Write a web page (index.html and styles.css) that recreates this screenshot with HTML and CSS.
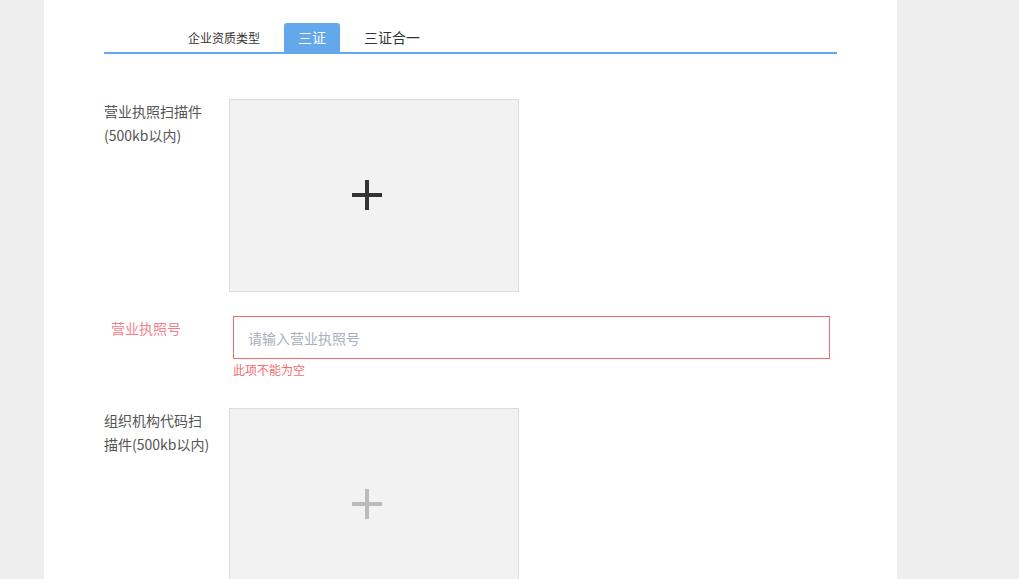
FILE: index.html
```html
<!DOCTYPE html>
<html lang="zh-CN">
<head>
<meta charset="utf-8">
<title>三证</title>
<link rel="stylesheet" href="styles.css">
</head>
<body>
<div class="page">
  <div class="tabs">
    <div class="tab-list">
      <span class="tab tab-small">企业资质类型</span>
      <span class="tab active">三证</span>
      <span class="tab">三证合一</span>
    </div>
  </div>

  <div class="row">
    <div class="label">营业执照扫描件<br>(500kb以内)</div>
    <div class="upload">
      <svg class="plus" width="30" height="30" viewBox="0 0 30 30"><path d="M15 0V30M0 15H30" stroke="#333" stroke-width="4"/></svg>
    </div>
  </div>

  <div class="row row-input">
    <div class="label label-error">营业执照号</div>
    <div class="field">
      <input class="input" type="text" placeholder="请输入营业执照号">
      <div class="error">此项不能为空</div>
    </div>
  </div>

  <div class="row row-last">
    <div class="label">组织机构代码扫<br>描件(500kb以内)</div>
    <div class="upload">
      <svg class="plus" width="30" height="30" viewBox="0 0 30 30"><path d="M15 0V30M0 15H30" stroke="#bbb" stroke-width="4"/></svg>
    </div>
  </div>
</div>
</body>
</html>
```

FILE: styles.css
```css
html, body {
  margin: 0;
  padding: 0;
  background: #eeeeee;
  height: 100%;
  overflow: hidden;
}
body {
  font-family: "Noto Sans CJK SC", "Noto Sans", sans-serif;
  color: #333;
}
.page {
  margin-left: 44px;
  width: 793px;
  min-height: 579px;
  background: #fff;
  padding: 23px 0 0 60px;
}
.tabs {
  width: 733px;
  border-bottom: 2px solid #63a8eb;
}
.tab-list {
  display: flex;
  gap: 10px;
  margin-left: 70px;
}
.tab {
  height: 29px;
  line-height: 29px;
  padding: 0 14px;
  font-size: 14px;
  color: #333;
  border-radius: 3px 3px 0 0;
}
.tab-small {
  font-size: 12px;
}
.tab.active {
  background: #63a8eb;
  color: #fff;
}
.row {
  display: flex;
  margin-top: 45px;
}
.label {
  width: 111px;
  margin-right: 14px;
  font-size: 14px;
  line-height: 24px;
  color: #555;
  white-space: nowrap;
}
.upload {
  width: 288px;
  height: 191px;
  border: 1px solid #dcdcdc;
  background: #f2f2f2;
  display: flex;
  align-items: center;
  justify-content: center;
}
.plus {
  margin-right: 14px;
  margin-top: -2px;
}
.row-input {
  margin-top: 24px;
}
.label-error {
  color: #f2828c;
  padding-left: 7px;
  width: 104px;
}
.field {
  margin-left: 4px;
}
.input {
  box-sizing: border-box;
  width: 597px;
  height: 43px;
  border: 1px solid #f56c6c;
  padding: 0 14px;
  font-family: inherit;
  font-size: 14px;
  color: #333;
  outline: none;
  margin: 0;
  display: block;
}
.input::placeholder {
  color: #a9b0bb;
}
.error {
  font-size: 12px;
  line-height: 18px;
  margin-top: 2px;
  color: #f56c6c;
}
.row-last {
  margin-top: 29px;
}
```
